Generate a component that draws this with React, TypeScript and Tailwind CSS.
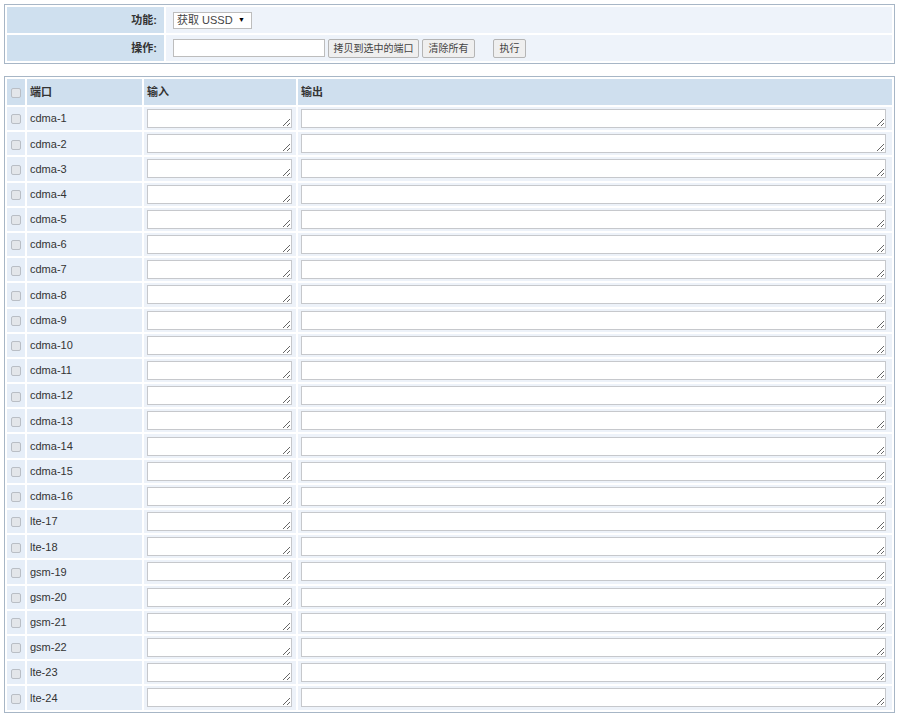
import React from "react";

const ports = [
  "cdma-1","cdma-2","cdma-3","cdma-4","cdma-5","cdma-6","cdma-7","cdma-8",
  "cdma-9","cdma-10","cdma-11","cdma-12","cdma-13","cdma-14","cdma-15","cdma-16",
  "lte-17","lte-18","gsm-19","gsm-20","gsm-21","gsm-22","lte-23","lte-24",
];

function Box() {
  return (
    <span className="inline-block w-[10px] h-[10px] rounded-[2px] border border-[#b9bec5] bg-[#e3e6ea] align-middle" />
  );
}

const font = "[font-family:'Liberation_Sans','Noto_Sans_CJK_SC',sans-serif]";

export default function App() {
  return (
    <div className={`bg-white w-[900px] h-[717px] pt-[4px] pl-[4px] text-[11px] text-[#333] ${font}`}>
      <table className="w-[891px] border border-[#a7b6c6] border-separate [border-spacing:2px] bg-white">
        <tbody>
          <tr className="h-[26px]">
            <td className="w-[157px] bg-[#cfe0ef] text-right pr-[7px] font-bold">功能:</td>
            <td className="bg-[#eef3fa] pl-[7px]">
              <div className="inline-flex items-center w-[79px] h-[17px] border border-[#bdbdbd] bg-white pl-[3px] text-[11px] text-[#444] whitespace-nowrap">
                <span>获取 USSD</span>
                <span className="ml-auto mr-[6px] text-[7px] text-black">▼</span>
              </div>
            </td>
          </tr>
          <tr className="h-[26px]">
            <td className="bg-[#cfe0ef] text-right pr-[7px] font-bold">操作:</td>
            <td className="bg-[#eef3fa] pl-[7px]">
              <div className="flex items-center whitespace-nowrap">
                <div className="w-[152px] h-[18px] border border-[#bdbdbd] bg-white" />
                <button className="ml-[3px] h-[19px] w-[91px] border border-[#b5b5b5] bg-[#efefef] text-[10px] text-[#444] rounded-[2px]">拷贝到选中的端口</button>
                <button className="ml-[3px] h-[19px] w-[53px] border border-[#b5b5b5] bg-[#efefef] text-[10px] text-[#444] rounded-[2px]">清除所有</button>
                <button className="ml-[18px] h-[19px] w-[33px] border border-[#b5b5b5] bg-[#efefef] text-[10px] text-[#444] rounded-[2px]">执行</button>
              </div>
            </td>
          </tr>
        </tbody>
      </table>

      <table className="mt-[12px] w-[891px] border border-[#a7b6c6] border-separate [border-spacing:2px] bg-white">
        <tbody>
          <tr className="h-[26px] bg-[#cfdfee] font-bold">
            <td className="w-[18px] bg-[#cfdfee] pl-[4px]"><Box /></td>
            <td className="w-[115px] bg-[#cfdfee] pl-[3px]">端口</td>
            <td className="w-[152px] bg-[#cfdfee] pl-[3px]">输入</td>
            <td className="bg-[#cfdfee] pl-[3px]">输出</td>
          </tr>
          {ports.map((p) => (
            <tr key={p} className="h-[23.2px]">
              <td className="bg-[#e6eef8] pl-[4px]"><Box /></td>
              <td className="bg-[#e6eef8] pl-[3px]">{p}</td>
              <td className="bg-[#edf2f9] pl-[3px] py-0">
                <textarea readOnly className="block w-[145px] h-[19px] border border-[#c6c8cc] bg-white resize" />
              </td>
              <td className="bg-[#edf2f9] pl-[3px] py-0">
                <textarea readOnly className="block w-[585px] h-[19px] border border-[#c6c8cc] bg-white resize" />
              </td>
            </tr>
          ))}
        </tbody>
      </table>
    </div>
  );
}
